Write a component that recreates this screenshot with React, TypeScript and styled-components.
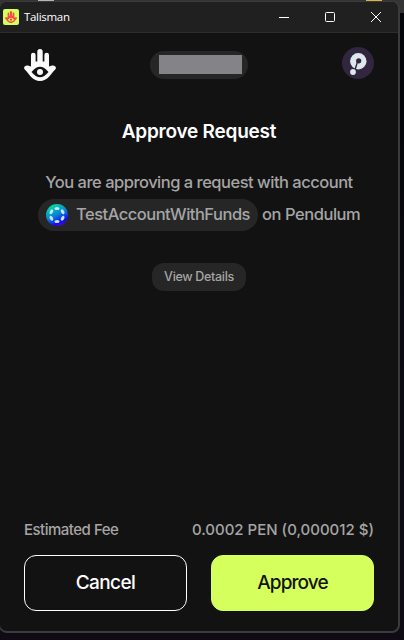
import React from 'react';
import styled, { createGlobalStyle } from 'styled-components';

const GlobalStyle = createGlobalStyle`
  * { box-sizing: border-box; }
  body { margin: 0; background: #0b0a12; overflow: hidden; }
  button { font: inherit; border: 0; padding: 0; background: none; }
  svg { display: block; flex: none; }
`;

const Desktop = styled.div`
  width: 404px;
  height: 640px;
  overflow: hidden;
  padding-top: 1px;
  font-family: Inter, "Liberation Sans", sans-serif;
  background:
    linear-gradient(#d9b545, #d9b545) 366px 0 / 16px 1px no-repeat,
    linear-gradient(#b5b5b5, #b5b5b5) 38px 0 / 16px 1px no-repeat,
    linear-gradient(#343434, #343434) 0 0 / 404px 13px no-repeat,
    linear-gradient(#05060b 0, #05060b 130px, #0c0b14 400px, #0e0b14 640px);
`;

const Window = styled.main`
  width: 401px;
  height: 632px;
  margin-left: -1px;
  display: flex;
  flex-direction: column;
  overflow: hidden;
  background: #121212;
  border: solid #3b3b3b;
  border-width: 1px 2px 2px 1px;
  border-radius: 8px;
`;

const TitleBar = styled.header`
  height: 31px;
  flex: none;
  display: flex;
  align-items: center;
  padding-left: 3px;
  margin-right: -1px;
  background: #202020;
  border-bottom: 1px solid #2d2d2d;
`;

const WindowTitle = styled.span`
  flex: 1;
  margin-left: 5px;
  color: #fff;
  font: 11.5px/16px "Open Sans", "Noto Sans", sans-serif;
  letter-spacing: -0.3px;
`;

const WindowButton = styled.button`
  width: 46px;
  height: 30px;
  display: grid;
  place-items: center;
`;

const Content = styled.section`
  flex: 1;
  display: flex;
  flex-direction: column;
  padding: 14px 24px 20px;
`;

const Toolbar = styled.div`
  height: 36px;
  display: flex;
  align-items: center;
  justify-content: space-between;
`;

const NetworkPill = styled.div`
  width: 98px;
  height: 28px;
  padding-bottom: 1px;
  display: grid;
  place-items: center;
  border-radius: 14px;
  background: #262626;
`;

const Redaction = styled.div`
  width: 83px;
  height: 19px;
  margin-left: 2px;
  background: #838388;
`;

const NetworkAvatar = styled.div`
  align-self: flex-start;
`;

const Heading = styled.h1`
  margin: 36px 0 0;
  text-align: center;
  color: #fff;
  font-size: 19px;
  line-height: 26px;
  font-weight: 600;
  letter-spacing: -0.22px;
`;

const Message = styled.div`
  margin-top: 21px;
  display: flex;
  flex-direction: column;
  align-items: center;
  color: #a5a5a5;
  font-size: 16.5px;
  line-height: 32px;
  font-weight: 450;
  white-space: nowrap;
`;

const MessageLine = styled.div`
  display: flex;
  align-items: center;
`;

const AccountLine = styled(MessageLine)`
  align-self: flex-start;
  height: 33px;
  margin-left: 14px;
  line-height: 30px;
  align-items: flex-end;
`;

const Tracked = styled.span<{ $tracking: number }>`
  letter-spacing: ${({ $tracking }) => $tracking}px;
`;

const AccountPill = styled.span`
  width: 220px;
  height: 32px;
  display: flex;
  align-items: center;
  gap: 8px;
  padding-left: 8px;
  margin-right: 4px;
  border-radius: 16px;
  background: #262626;
`;

const AccountName = styled(Tracked)`
  height: 32px;
`;

const NetworkName = styled(Tracked)`
  height: 32px;
`;

const DetailsButton = styled.button`
  align-self: center;
  width: 94px;
  height: 28px;
  margin-top: 32px;
  padding-bottom: 1px;
  border-radius: 12px;
  background: #262626;
  color: #a5a5a5;
  && { font-size: 12.5px; font-weight: 450; letter-spacing: -0.32px; }
`;

const Footer = styled.footer`
  margin-top: auto;
`;

const FeeRow = styled.div`
  display: flex;
  justify-content: space-between;
  margin-bottom: 15px;
  color: #a5a5a5;
  font-size: 15px;
  line-height: 20px;
  font-weight: 450;
`;

const Actions = styled.div`
  display: grid;
  grid-template-columns: 1fr 1fr;
  gap: 24px;
`;

const ActionButton = styled.button<{ $primary?: boolean }>`
  height: 56px;
  border-radius: 12px;
  color: ${({ $primary }) => ($primary ? '#121212' : '#fff')};
  background: ${({ $primary }) => ($primary ? '#d5ff5c' : 'transparent')};
  && {
    border: 1px solid ${({ $primary }) => ($primary ? '#d5ff5c' : '#fff')};
    padding-bottom: 2px;
    font-size: 19px;
    font-weight: ${({ $primary }) => ($primary ? 450 : 500)};
    letter-spacing: ${({ $primary }) => ($primary ? -0.9 : -0.6)}px;
  }
`;

function Hand({ color, eye, size }: { color: string; eye: string; size: number }) {
  return (
    <svg width={size} height={size} viewBox="0 0 32 32">
      <path
        d="M7 17.500V6a2.300 2.300 0 0 1 4.600 0v6.500h1.700V2.700a2.700 2.700 0 0 1 5.400 0v9.800h1.700V6A2.300 2.300 0 0 1 25 6v11.500l3-.9c2.700-.8 5.200 1.900 3.200 3.800C27.500 24 23.500 32 16 32S4.500 24 .8 20.400c-2-1.900.5-4.600 3.200-3.800l3 .9Z"
        fill={color}
      />
      <path d="M7.500 23q8.500-10.600 17 0-8.500 10.600-17 0Z" fill={eye} />
      <circle cx="16" cy="23" r="3" fill={color} />
    </svg>
  );
}

function AppIcon() {
  return (
    <svg width="16" height="16" viewBox="0 0 16 16">
      <rect width="16" height="16" rx="2" fill="#d5ff5c" />
      <svg x="2" y="2" width="12" height="12">
        <Hand color="#fd4848" eye="#d5ff5c" size={12} />
      </svg>
    </svg>
  );
}

function PendulumLogo() {
  return (
    <svg width="32" height="32" viewBox="0 0 32 32">
      <circle cx="16" cy="16" r="16" fill="#32253f" />
      <circle cx="16.300" cy="14.200" r="8.200" fill="#dde8ec" />
      <circle cx="16.700" cy="13.800" r="2.600" fill="#32253f" />
      <path d="m15.400 15-2.300 7.500" stroke="#32253f" strokeWidth="1.400" />
      <circle cx="11" cy="25" r="3.700" fill="#32253f" />
      <circle cx="11" cy="25" r="2.900" fill="#dde8ec" />
    </svg>
  );
}

function AccountAvatar() {
  return (
    <svg width="22" height="22" viewBox="0 0 22 22">
      <defs>
        <linearGradient id="avatar" x1=".25" y1="0" x2=".75" y2="1">
          <stop stopColor="#00e69b" />
          <stop offset=".5" stopColor="#0a7fd8" />
          <stop offset=".82" stopColor="#1607ed" />
          <stop offset="1" stopColor="#5510b8" />
        </linearGradient>
      </defs>
      <circle cx="11" cy="11" r="11" fill="url(#avatar)" />
      {[0, 60, 120, 180, 240, 300].map((angle) => (
        <ellipse
          key={angle}
          cx="11"
          cy="4.500"
          rx="2.600"
          ry="1.600"
          fill="#c6e6fb"
          transform={`rotate(${angle} 11 11)`}
        />
      ))}
    </svg>
  );
}

function WindowGlyph({ path }: { path: string }) {
  return (
    <svg width="10" height="10" viewBox="0 0 10 10" overflow="visible">
      <path d={path} fill="none" stroke="#fff" />
    </svg>
  );
}

export default function App() {
  return (
    <>
      <GlobalStyle />
      <Desktop>
        <Window>
          <TitleBar>
            <AppIcon />
            <WindowTitle>Talisman</WindowTitle>
            <WindowButton aria-label="Minimize"><WindowGlyph path="M0 5.500h10" /></WindowButton>
            <WindowButton aria-label="Maximize"><WindowGlyph path="M1.500.5h7a1 1 0 0 1 1 1v7a1 1 0 0 1-1 1h-7a1 1 0 0 1-1-1v-7a1 1 0 0 1 1-1Z" /></WindowButton>
            <WindowButton aria-label="Close"><WindowGlyph path="m0 0 10 10M10 0 0 10" /></WindowButton>
          </TitleBar>
          <Content>
            <Toolbar>
              <Hand color="#fafafa" eye="#121212" size={32} />
              <NetworkPill><Redaction /></NetworkPill>
              <NetworkAvatar><PendulumLogo /></NetworkAvatar>
            </Toolbar>
            <Heading>Approve Request</Heading>
            <Message>
              <MessageLine>
                <Tracked $tracking={-0.5}>You are approving a request with account</Tracked>
              </MessageLine>
              <AccountLine>
                <AccountPill>
                  <AccountAvatar />
                  <AccountName $tracking={-0.5}>TestAccountWithFunds</AccountName>
                </AccountPill>
                <NetworkName $tracking={-0.45}>on Pendulum</NetworkName>
              </AccountLine>
            </Message>
            <DetailsButton>View Details</DetailsButton>
            <Footer>
              <FeeRow>
                <Tracked $tracking={-0.5}>Estimated Fee</Tracked>
                <Tracked $tracking={0}>0.0002 PEN (0,000012 $)</Tracked>
              </FeeRow>
              <Actions>
                <ActionButton>Cancel</ActionButton>
                <ActionButton $primary>Approve</ActionButton>
              </Actions>
            </Footer>
          </Content>
        </Window>
      </Desktop>
    </>
  );
}
